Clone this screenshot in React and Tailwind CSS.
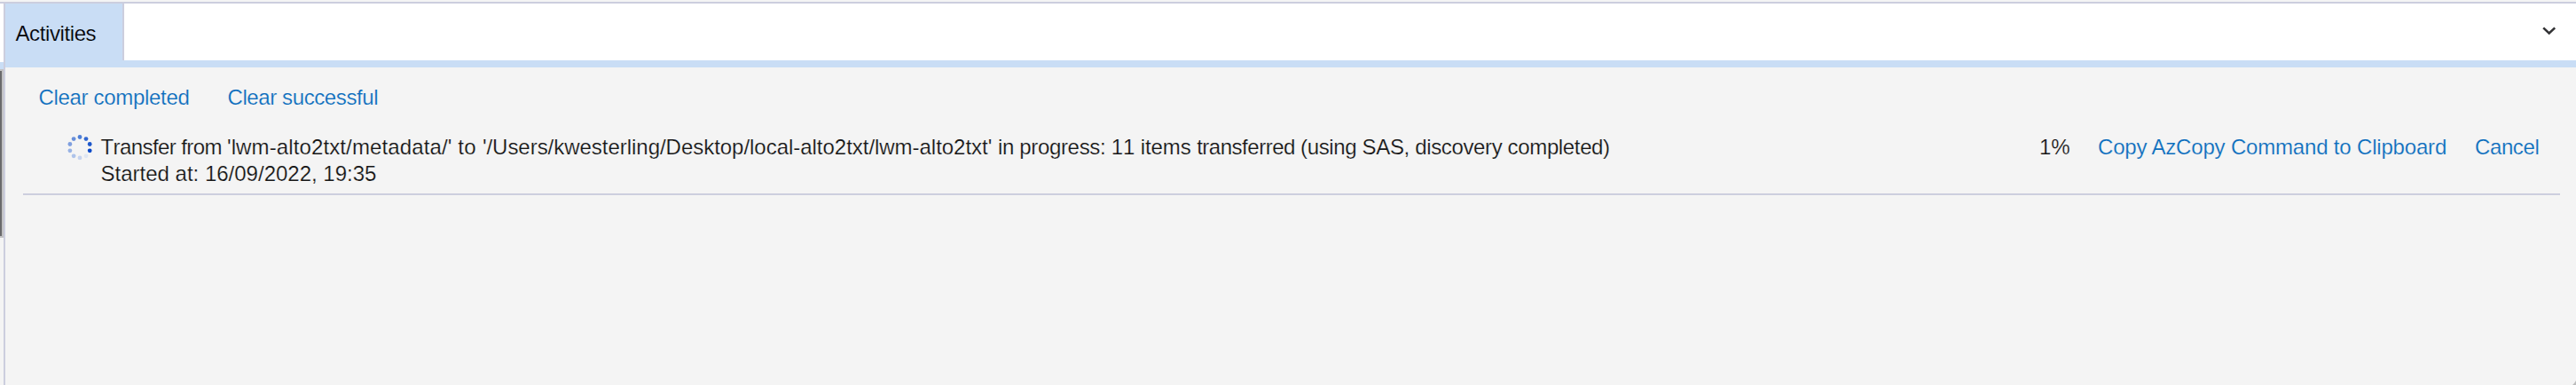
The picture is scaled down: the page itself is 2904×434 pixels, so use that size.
const LINK = "text-[#0a6cbd] whitespace-nowrap [-webkit-text-stroke:0.2px_#f4f4f4]";
const TEXT = "text-[#151515] whitespace-pre [-webkit-text-stroke:0.2px_#f4f4f4]";

const DOTS = [
  [15, 3.5, "#4f7fd6"],
  [22, 5.6, "#3267d0"],
  [26.2, 11.5, "#1c56cb"],
  [26.2, 18.8, "#0a48c8"],
  [22, 24.8, "#dfe6f3"],
  [15, 26.9, "#c5d3ef"],
  [8.1, 24.8, "#aec3ea"],
  [3.9, 18.8, "#98b3e5"],
  [3.9, 11.5, "#7f9fdf"],
  [8.1, 5.6, "#688fda"],
];

function Spinner() {
  return (
    <svg className="h-[30px] w-[30px] shrink-0" viewBox="0 0 30 30">
      {DOTS.map(([cx, cy, fill]) => (
        <circle key={`${cx}-${cy}`} cx={cx} cy={cy} r="2.4" fill={fill} />
      ))}
    </svg>
  );
}

function Activity() {
  return (
    <div className="ml-5 mr-[18px] flex h-[81px] border-b-2 border-[#cccede] pl-[49px] pr-6">
      <div className="mt-[12px]">
        <Spinner />
      </div>
      <div className="ml-[8.5px] grow">
        <div className={`${TEXT} mt-[12px] h-[30px] leading-[30px] [font-kerning:none]`}>
          <span className="tracking-[-0.59px]">{"Transfer from "}</span>
          <span className="tracking-[0.12px]">{"'lwm-alto2txt/metadata/' "}</span>
          <span className="tracking-[0.33px]">{"to "}</span>
          <span className="tracking-[-0.03px]">
            {"'/Users/kwesterling/Desktop/local-alto2txt/lwm-alto2txt' "}
          </span>
          <span className="tracking-[-0.33px]">{"in progress: "}</span>
          <span className="tracking-[-0.1px]">{"11 items "}</span>
          <span className="tracking-[-0.48px]">{"transferred "}</span>
          <span className="tracking-[-0.36px]">{"(using SAS, discovery completed)"}</span>
        </div>
        <div className={`${TEXT} h-[30px] leading-[30px] [font-kerning:none]`}>
          Started at: 16/09/2022, 19:35
        </div>
      </div>
      <div className="mt-[12px] flex leading-[30px]">
        <span className={`${TEXT} w-[66px]`}>1%</span>
        <button className={`${LINK} h-[30px] w-[425px] text-left tracking-[-0.18px]`}>
          Copy AzCopy Command to Clipboard
        </button>
        <button className={`${LINK} h-[30px] w-[72px] text-left tracking-[-0.4px]`}>Cancel</button>
      </div>
    </div>
  );
}

export default function App() {
  return (
    <div className="relative flex h-[434px] w-full flex-col overflow-hidden bg-[#f4f4f4] font-['Liberation_Sans',Arial,sans-serif] text-[24px]">
      <div className="h-1 shrink-0 border-b-2 border-[#cccede]" />
      <div className="flex grow">
        <div className="flex w-1 shrink-0 flex-col">
          <div className="h-[66px] bg-white" />
          <div className="h-2 bg-[#c9ddf5]" />
          <div className="h-[190px] border-b-2 border-r-2 border-t-2 border-[#c2c2c4] bg-[#69696b]" />
          <div className="grow" />
        </div>
        <div className="w-0.5 shrink-0 bg-[#cccede]" />
        <main className="flex grow flex-col">
          <header className="flex h-[72px] items-start justify-between border-b-8 border-[#c9ddf5] bg-white">
            <div className="h-16 w-[134px] border-r-2 border-[#cccede] bg-[#c9ddf5] pl-[11.5px] leading-[67px] tracking-[-0.4px] text-black [-webkit-text-stroke:0.2px_#c9ddf5]">
              Activities
            </div>
            <svg
              className="mr-[22px] mt-[24px] h-4 w-4"
              viewBox="0 0 16 16"
              fill="none"
              stroke="#333335"
              strokeWidth="2.6"
            >
              <path d="M1.2 3.4 L7.7 9.5 L14.2 3.4" />
            </svg>
          </header>
          <nav className="mt-[19px] flex h-[30px] leading-[30px]">
            <button className={`${LINK} ml-[37.5px] w-[213px] text-left tracking-[-0.32px]`}>Clear completed</button>
            <button className={`${LINK} text-left tracking-[-0.4px]`}>Clear successful</button>
          </nav>
          <div className="mt-[14px]">
            <Activity />
          </div>
        </main>
      </div>
      {/* rounded window edge */}
      <svg className="absolute bottom-0 right-0 h-[5px] w-1" viewBox="0 0 4 5">
        <path d="M4 0 L4 5 L0 5 Q2.5 3 4 0 Z" fill="#bcbcbc" />
      </svg>
    </div>
  );
}
